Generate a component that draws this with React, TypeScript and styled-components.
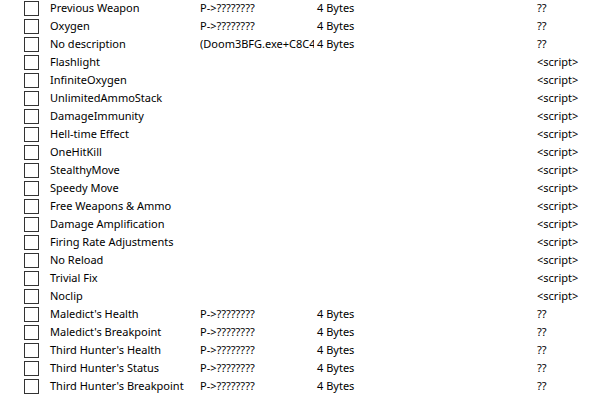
import React, { FC } from "react";
import styled, { createGlobalStyle } from "styled-components";

const GlobalStyle = createGlobalStyle`
  html, body {
    margin: 0;
    padding: 0;
    background: #ffffff;
  }
`;

type Entry = {
  desc: string;
  address?: string;
  type?: string;
  value: string;
};

const entries: Entry[] = [
  { desc: "Previous Weapon", address: "P->????????", type: "4 Bytes", value: "??" },
  { desc: "Oxygen", address: "P->????????", type: "4 Bytes", value: "??" },
  { desc: "No description", address: "(Doom3BFG.exe+C8C40", type: "4 Bytes", value: "??" },
  { desc: "Flashlight", value: "<script>" },
  { desc: "InfiniteOxygen", value: "<script>" },
  { desc: "UnlimitedAmmoStack", value: "<script>" },
  { desc: "DamageImmunity", value: "<script>" },
  { desc: "Hell-time Effect", value: "<script>" },
  { desc: "OneHitKill", value: "<script>" },
  { desc: "StealthyMove", value: "<script>" },
  { desc: "Speedy Move", value: "<script>" },
  { desc: "Free Weapons & Ammo", value: "<script>" },
  { desc: "Damage Amplification", value: "<script>" },
  { desc: "Firing Rate Adjustments", value: "<script>" },
  { desc: "No Reload", value: "<script>" },
  { desc: "Trivial Fix", value: "<script>" },
  { desc: "Noclip", value: "<script>" },
  { desc: "Maledict's Health", address: "P->????????", type: "4 Bytes", value: "??" },
  { desc: "Maledict's Breakpoint", address: "P->????????", type: "4 Bytes", value: "??" },
  { desc: "Third Hunter's Health", address: "P->????????", type: "4 Bytes", value: "??" },
  { desc: "Third Hunter's Status", address: "P->????????", type: "4 Bytes", value: "??" },
  { desc: "Third Hunter's Breakpoint", address: "P->????????", type: "4 Bytes", value: "??" },
];

const Table = styled.div`
  width: 597px;
  height: 395px;
  overflow: hidden;
  background: #ffffff;
  font-family: "Noto Sans", "Liberation Sans", sans-serif;
  font-size: 11px;
  color: #000000;
`;

const Row = styled.div`
  display: grid;
  grid-template-columns: 24px 26px 150px 117px 220px 1fr;
  align-items: start;
  height: 18px;
  white-space: nowrap;
`;

const Check = styled.div`
  width: 13px;
  height: 13px;
  border: 1px solid #333333;
  background: #ffffff;
  grid-column: 2;
  margin-top: 1px;
`;

const Cell = styled.span<{ $clip?: boolean }>`
  overflow: ${(p) => (p.$clip ? "hidden" : "visible")};
  max-width: ${(p) => (p.$clip ? "114px" : "none")};
  line-height: 16px;
`;

const App: FC = () => {
  return (
    <>
      <GlobalStyle />
      <Table>
        {entries.map((e, i) => (
          <Row key={i}>
            <Check />
            <Cell>{e.desc}</Cell>
            <Cell $clip>{e.address ?? ""}</Cell>
            <Cell>{e.type ?? ""}</Cell>
            <Cell>{e.value}</Cell>
          </Row>
        ))}
      </Table>
    </>
  );
};

export default App;
